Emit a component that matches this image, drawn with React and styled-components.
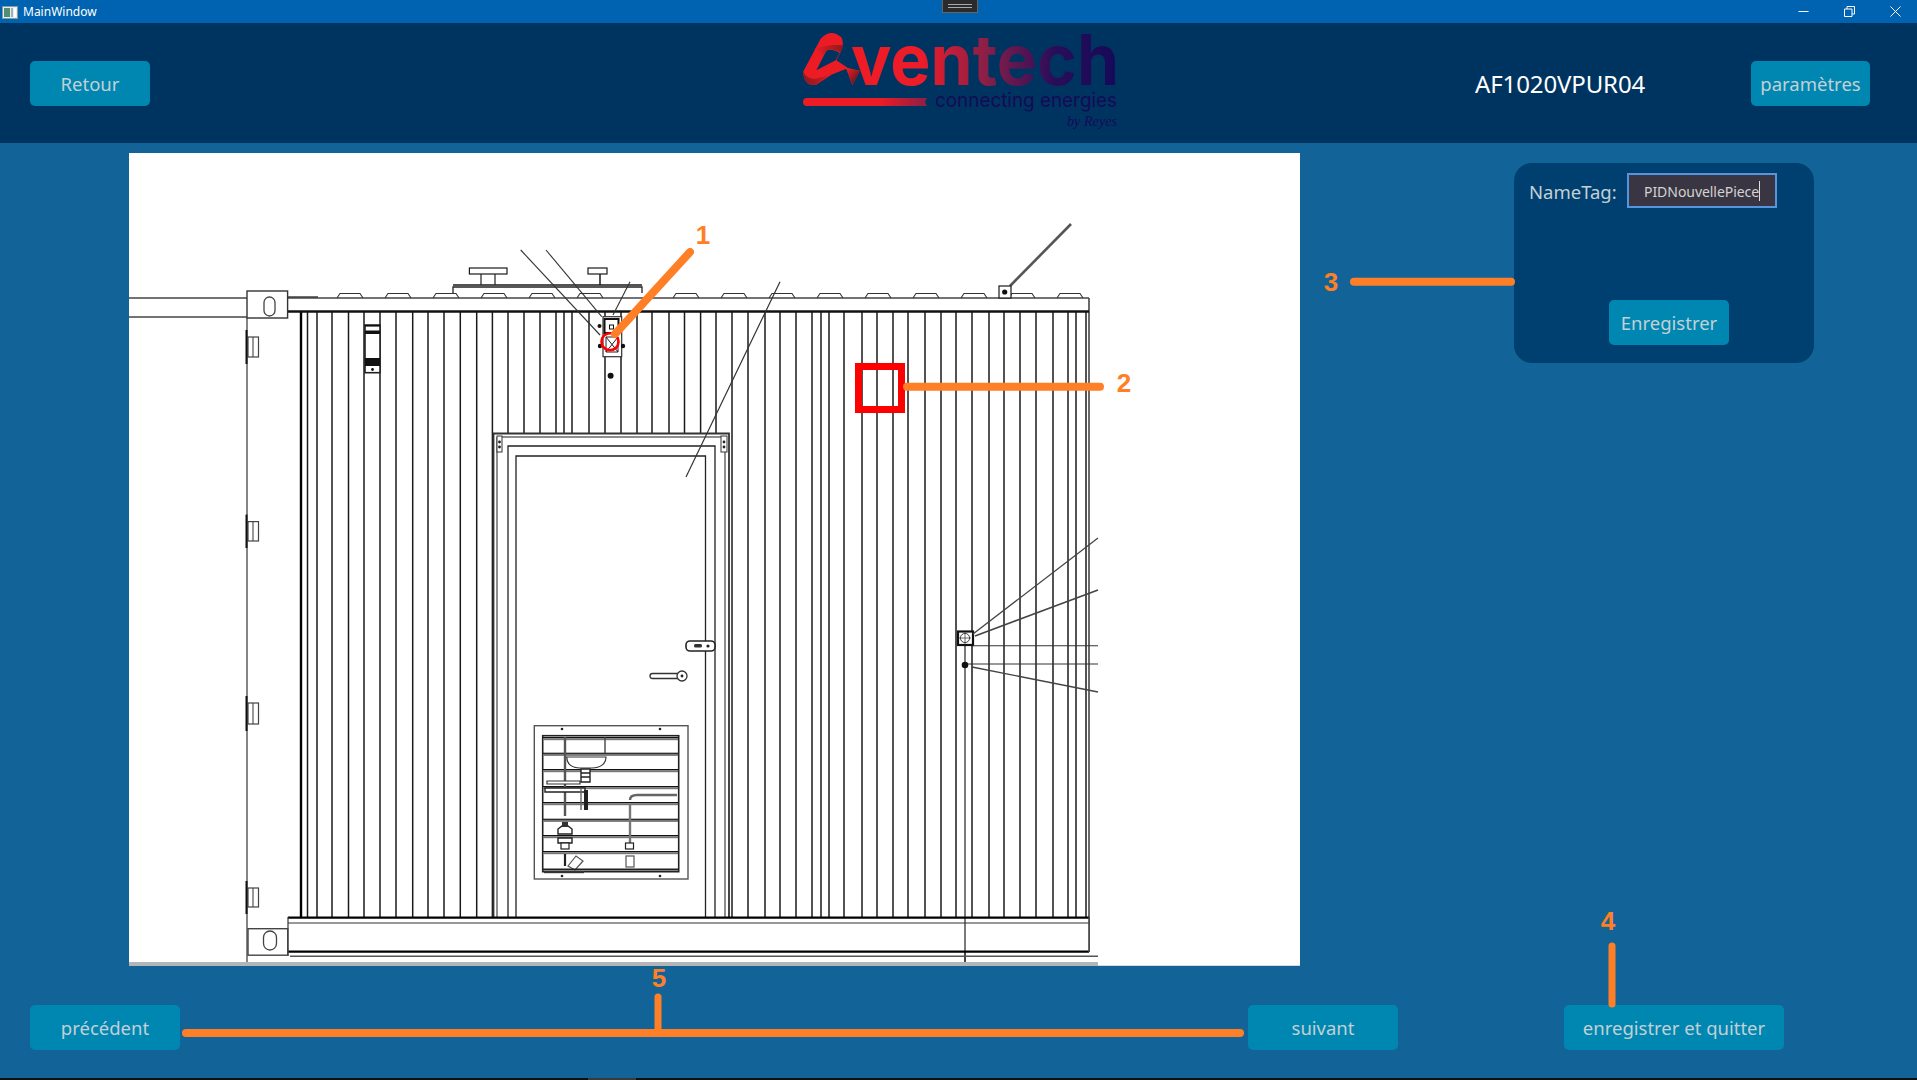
import React from "react";
import styled, { createGlobalStyle } from "styled-components";

const Global = createGlobalStyle`
  html, body { margin: 0; padding: 0; background: #126498; }
  * { box-sizing: border-box; }
`;

const UI = `"Noto Sans", "Open Sans", "Liberation Sans", sans-serif`;

const Page = styled.div`
  position: relative; width: 1917px; height: 1080px; overflow: hidden;
  display: flex; flex-direction: column; background: #126498; font-family: ${UI};
`;
const TitleBar = styled.div`
  position: relative; height: 23px; flex: none; background: #0063b1; color: #fff;
  display: flex; align-items: center; padding-left: 2px;
`;
const TitleText = styled.span`margin-left: 5px; font-size: 12px; line-height: 23px;`;
const WindowButtons = styled.div`margin-left: auto; margin-right: -1px; display: flex; height: 23px;`;
const WindowButton = styled.span`
  width: 46px; height: 23px; display: flex; align-items: center; justify-content: center;
`;
const SnapTab = styled.div`
  position: absolute; left: 942px; top: 0; width: 36px; height: 13px;
  background: #2b2b2b; border: 1px solid #666; border-top: 0;
  display: flex; flex-direction: column; gap: 2px; align-items: center; justify-content: center;
  &::before, &::after { content: ""; width: 24px; height: 1px; background: #aaa; }
`;
const Header = styled.header`
  height: 120px; flex: none; background: #003460; display: flex; align-items: center;
  padding-left: 30px;
`;
const Button = styled.button`
  height: 45px; width: ${(p) => p.$w}px; flex: none; border: 0; border-radius: 5px; padding: 1px 0 0;
  background: #0087b1; color: #c3d0d5; font-family: ${UI}; font-size: 18.5px; line-height: 44px;
`;
const Logo = styled.svg`display: block; flex: none; margin-left: 645px; width: 330px; height: 120px; overflow: visible;`;
const ProductName = styled.div`
  flex: none; width: 276px; margin-left: 350px; color: #fff; font-size: 24px;
  letter-spacing: -0.12px; white-space: nowrap;
`;
const Main = styled.main`
  flex: none; display: flex; align-items: flex-start; padding: 10px 0 0 129px;
`;
const Sheet = styled.svg`
  display: block; flex: none; width: 1171px; height: 813px; background: #fff;
`;
const SidePanel = styled.section`
  flex: none; width: 300px; height: 200px; margin: 10px 0 0 214px; padding: 10px 16px 10px 15px;
  border-radius: 18px; background: #004070; display: flex; flex-direction: column;
`;
const FieldRow = styled.div`display: flex; align-items: center; gap: 11px; height: 35px;`;
const Label = styled.label`color: #c3d0d5; font-size: 18.5px; width: 87px; white-space: nowrap; padding-top: 2px;`;
const TextField = styled.div`
  width: 150px; height: 35px; flex: none; border: 2px solid #5595e0; background: #3a3542;
  color: #d3d3d3; font-size: 14px; padding: 1px 0 0 15px; display: flex; align-items: center;
  letter-spacing: -0.05px;
`;
const Caret = styled.span`display: inline-block; width: 1px; height: 20px; background: #ddd;`;
const PanelActions = styled.div`margin-top: 92px; padding-left: 80px; display: flex;`;
const BottomBar = styled.div`
  flex: none; display: flex; margin-top: 39px; padding-left: 30px;
`;
const NextWrap = styled.div`flex: none; margin-left: 1068px;`;
const QuitWrap = styled.div`flex: none; margin-left: 166px;`;
const Edge = styled.div`
  position: absolute; left: 0; right: 0; bottom: 0; height: 2px; background: #111;
  &::after { content: ""; position: absolute; left: 588px; width: 48px; top: 0; height: 2px; background: #3a3a3a; }
`;
const Overlay = styled.svg`
  position: absolute; left: 0; top: 0; width: 1917px; height: 1080px; pointer-events: none;
`;
const Mark = styled.text`
  font-family: "Liberation Sans", Arial, sans-serif; font-weight: 700; font-size: 26px; fill: #ff7f27;
`;

const panels = [307.5,317,332,348.5,364,380,396,412.7,428,444,460.3,476.7,492.4];
const upper = [508,524,540,556,564,572,589,605,621,637,652,669,684.5,700.6];
const right = [716,732,748,765,780,796,812,821,829,844,862,877,893,908,925,941,956,972,989,1004,1020,1036,1053,1068,1076,1086];
const bumps = [337,385,433,481,529,577,673,721,769,817,865,913,961,1009,1057];
const slats = [737,752.7,769,786,802,818.7,835,851];
const hinges = [[337,357],[521.6,541],[703,724],[888,907]];

const S = ({ x1, y1, x2, y2, w = 1.5, c = "#1a1a1a" }) => <line x1={x1} y1={y1} x2={x2} y2={y2} stroke={c} strokeWidth={w} />;
const R = ({ x, y, w, h, s = 1.2, f = "#fff", c = "#1a1a1a", r = 0 }) => <rect x={x} y={y} width={w} height={h} rx={r} fill={f} stroke={c} strokeWidth={s} />;

function Drawing() {
  return (
    <Sheet viewBox="129 153 1171 813">
      {/* corrugated wall */}
      <S x1={301} y1={312} x2={301} y2={917} w={2.4} c="#000" />
      {panels.map((x) => <S key={x} x1={x} y1={312} x2={x} y2={917} />)}
      {upper.map((x) => <S key={x} x1={x} y1={312} x2={x} y2={433} />)}
      {right.map((x) => <S key={x} x1={x} y1={312} x2={x} y2={917} />)}
      <S x1={1089} y1={298} x2={1089} y2={952} w={1.6} c="#444" />

      {/* roof */}
      <S x1={129} y1={298} x2={1089} y2={298} w={1.4} c="#444" />
      <S x1={129} y1={317} x2={288} y2={317} w={1.4} c="#444" />
      <S x1={288} y1={311.5} x2={1089} y2={311.5} w={2.4} c="#111" />
      <S x1={288} y1={297} x2={318} y2={297} w={1.4} c="#333" />
      {bumps.map((x) => (
        <path key={x} d={`M${x} 298 l3 -4.5 h20 l3 4.5`} fill="none" stroke="#333" strokeWidth="1.1" />
      ))}
      <path d="M453 293 v-6 h189 v6" fill="#fff" stroke="#222" strokeWidth="1.3" />
      <S x1={453} y1={285} x2={642} y2={285} w={1.3} />
      <R x={469.4} y={268} w={37.6} h={6} />
      <path d="M481 274 v11 M495 274 v11" stroke="#222" strokeWidth="1.2" fill="none" />
      <R x={588} y={268} w={19} h={6} />
      <S x1={600} y1={274} x2={600} y2={285} />
      <R x={247} y={291} w={40.6} h={27} s={1.4} c="#333" />
      <rect x={264} y={297} width={11} height={19} rx={5.5} fill="#fff" stroke="#444" strokeWidth="1.3" />

      {/* door on the left end */}
      <S x1={247} y1={318} x2={247} y2={966} w={1.2} c="#333" />
      {hinges.map(([a, b]) => (
        <g key={a}>
          <R x={248} y={a} w={10.5} h={b - a} c="#444" />
          <S x1={253} y1={a} x2={253} y2={b} w={1.1} c="#444" />
          <S x1={246.5} y1={a - 7} x2={246.5} y2={b + 7} w={2} c="#111" />
        </g>
      ))}

      {/* left wall unit */}
      <R x={365} y={325} w={15} h={47.7} c="#222" s={1.6} />
      <rect x={365} y={325} width={15} height={1.6} fill="#111" />
      <rect x={365} y={330.5} width={15} height={3.5} fill="#111" />
      <rect x={365} y={358} width={15} height={8} fill="#111" />
      <circle cx={372.5} cy={369.5} r={1.4} fill="#111" />

      {/* leaders */}
      <S x1={520.7} y1={250} x2={600} y2={335} w={1.1} c="#333" />
      <S x1={546} y1={250} x2={601.7} y2={316.7} w={1.1} c="#333" />
      <S x1={630} y1={281.7} x2={613} y2={315} w={1.1} c="#333" />
      <S x1={1071} y1={224} x2={1010} y2={286} w={2.6} c="#555" />
      <R x={999} y={286} w={12} h={12} />
      <circle cx={1004.7} cy={292} r={2.6} fill="#111" />

      {/* device */}
      <R x={603} y={316.7} w={18.7} h={40} c="#333" />
      <rect x={604.5} y={319} width={14} height={14} fill="#fff" stroke="#111" strokeWidth="2" />
      <rect x={609.5} y={325} width={4} height={4} fill="#fff" stroke="#111" strokeWidth="1" />
      <path d="M606 337 h12 v15 h-12 z M606 337 l12 15 M618 337 l-12 15" fill="none" stroke="#222" strokeWidth="1" />
      <circle cx={600} cy={346} r={2.2} fill="#111" />
      <circle cx={623} cy={346} r={2.2} fill="#111" />
      <circle cx={599.5} cy={326} r={2} fill="#111" />
      <circle cx={610.6} cy={375.7} r={3} fill="#111" />

      {/* personnel door */}
      <rect x={494} y={433} width={235} height={484} fill="#fff" stroke="none" />
      <path d="M493.5 917 V433.5 H729 V917" fill="none" stroke="#333" strokeWidth="1.8" />
      <S x1={497} y1={437} x2={725} y2={437} w={1.1} />
      <path d="M497 917 V437 M725 917 V437" fill="none" stroke="#333" strokeWidth="1.1" />
      <path d="M508 917 V446 H715 V917" fill="none" stroke="#222" strokeWidth="1.3" />
      <path d="M516 917 V456 H705.5 V917" fill="none" stroke="#222" strokeWidth="1.3" />
      <rect x={497} y={436} width={5} height={16} fill="#fff" stroke="#333" />
      <rect x={721} y={436} width={6} height={16} fill="#fff" stroke="#333" />
      <circle cx={499.5} cy={442} r={1.4} fill="#222" />
      <circle cx={499.5} cy={447} r={1.4} fill="#222" />
      <circle cx={724} cy={442} r={1.4} fill="#222" />
      <circle cx={724} cy={447} r={1.4} fill="#222" />
      <S x1={780} y1={281.7} x2={686} y2={477} w={1.2} c="#333" />

      <rect x={686} y={641} width={29} height={10} rx={4} fill="#fff" stroke="#222" strokeWidth="1.6" />
      <rect x={694} y={644} width={8} height={3.5} rx={1.5} fill="#333" />
      <circle cx={708} cy={646} r={1.6} fill="#222" />
      <rect x={650} y={673.5} width={30} height={5} rx={2.5} fill="#fff" stroke="#333" strokeWidth="1.3" />
      <circle cx={682} cy={676} r={5} fill="#fff" stroke="#333" strokeWidth="1.3" />
      <circle cx={682} cy={676} r={1.4} fill="#222" />

      {/* louvre hatch */}
      <R x={534.3} y={725.7} w={153.7} h={153.3} s={1.4} c="#555" />
      <R x={542.7} y={735.7} w={136} h={136} s={1.6} c="#222" />
      {[[562,729],[660,729],[562,876],[660,876]].map(([x, y]) => <circle key={x + "" + y} cx={x} cy={y} r={1.3} fill="#222" />)}
      {slats.map((y) => (
        <g key={y}>
          <rect x={543} y={y} width={135} height={1.2} fill="#111" />
          <rect x={543} y={y + 1.2} width={135} height={2} fill="#777" />
        </g>
      ))}
      <path d="M565 737 V816" stroke="#555" strokeWidth="2.4" fill="none" />
      <path d="M605 737 V753" stroke="#444" strokeWidth="1.4" fill="none" />
      <path d="M566.7 757 h39.3 c0 7 -6 11 -14 11 h-12 c-8 0 -13.3 -4 -13.3 -11 z" fill="#fff" stroke="#333" strokeWidth="1.2" />
      <path d="M581 769 h9 v13 h-9 z M581 773 h9 M581 777 h9" fill="#fff" stroke="#222" strokeWidth="1.4" />
      <path d="M547 781 h33 v3 h-33 z" fill="#fff" stroke="#333" strokeWidth="1.2" />
      <path d="M545 788 h40 v4 h-40 z" fill="#fff" stroke="#222" strokeWidth="1.4" />
      <path d="M581 789 V810" stroke="#666" strokeWidth="1.4" fill="none" />
      <rect x={584} y={790} width={4} height={20} fill="#222" />
      <path d="M558 829 l4 -3 h6 l4 3 v5 h-14 z M558 838 h14 v5 h-14 z" fill="#fff" stroke="#222" strokeWidth="1.4" />
      <rect x={562} y={822} width={6} height={5} fill="#333" />
      <rect x={561} y={843} width={8} height={6} fill="#fff" stroke="#222" strokeWidth="1.2" />
      <path d="M565 854 V866" stroke="#222" strokeWidth="2.2" fill="none" />
      <path d="M568 866 l8 -10 l7 5 l-8 9 z" fill="#fff" stroke="#555" strokeWidth="1.2" />
      <path d="M630 804 V843" stroke="#777" strokeWidth="2.4" fill="none" />
      <path d="M630 800 q0 -5 7 -5 H677" stroke="#666" strokeWidth="2.4" fill="none" />
      <rect x={625.5} y={843} width={8} height={6} fill="#fff" stroke="#222" strokeWidth="1.2" />
      <rect x={626} y={856} width={8} height={11} fill="#fff" stroke="#555" strokeWidth="1.2" />
      <rect x={543} y={868.5} width={135} height={2} fill="#222" />
      <rect x={544} y={871} width={40} height={2.2} fill="#333" />

      {/* right-hand sensors */}
      <S x1={965} y1={645} x2={965} y2={966} w={1.2} c="#222" />
      <rect x={958} y={631.5} width={15} height={13.5} fill="#fff" stroke="#111" strokeWidth="2.2" />
      <circle cx={965} cy={638} r={4.6} fill="none" stroke="#444" strokeWidth="1" />
      <path d="M965 632 v12 M959 638 h12" stroke="#444" strokeWidth="0.8" />
      <S x1={973} y1={634} x2={1098} y2={538} w={1.3} c="#444" />
      <S x1={975} y1={636} x2={1098} y2={590} w={1.5} c="#444" />
      <S x1={973} y1={645.7} x2={1098} y2={645.7} w={1.1} c="#333" />
      <S x1={965} y1={664} x2={1098} y2={664} w={1.1} c="#333" />
      <S x1={972} y1={667} x2={1098} y2={692} w={1.4} c="#444" />
      <circle cx={965} cy={665} r={3.3} fill="#111" />

      {/* sill */}
      <rect x={288} y={918} width={801} height={34} fill="#fff" />
      <S x1={965} y1={918} x2={965} y2={966} w={1.2} c="#222" />
      <S x1={288} y1={917.7} x2={1089} y2={917.7} w={2.2} c="#000" />
      <S x1={288} y1={923} x2={1089} y2={923} w={1.1} c="#333" />
      <S x1={288} y1={951.7} x2={1089} y2={951.7} w={2.2} c="#000" />
      <S x1={288} y1={917} x2={288} y2={956} w={1.2} c="#333" />
      <S x1={1089} y1={917} x2={1089} y2={952} w={1.6} c="#444" />
      <S x1={290} y1={956.3} x2={1098} y2={956.3} w={1.4} c="#555" />
      <R x={248} y={928.7} w={39.7} h={26.5} c="#444" s={1.4} />
      <rect x={263.5} y={931} width={13} height={19} rx={6.5} fill="#fff" stroke="#444" strokeWidth="1.3" />
      <rect x={129} y={962} width={969} height={4} fill="#b5b5b5" />
      <rect x={1098} y={965} width={202} height={1} fill="#d8d8d8" />
    </Sheet>
  );
}

function BrandLogo() {
  return (
    <Logo viewBox="795 23 330 120">
      <defs>
        <linearGradient id="word" gradientUnits="userSpaceOnUse" x1="853" y1="0" x2="1117" y2="0">
          <stop offset="0" stopColor="#ed1c24" />
          <stop offset="0.26" stopColor="#ed1c2a" />
          <stop offset="0.5" stopColor="#8b1f47" />
          <stop offset="0.76" stopColor="#2a0d5a" />
          <stop offset="1" stopColor="#150a58" />
        </linearGradient>
        <linearGradient id="bar" gradientUnits="userSpaceOnUse" x1="803" y1="0" x2="927" y2="0">
          <stop offset="0.62" stopColor="#ed1c24" />
          <stop offset="1" stopColor="#8b1f47" />
        </linearGradient>
        <linearGradient id="foldTop" gradientUnits="userSpaceOnUse" x1="50" y1="70" x2="135" y2="60">
          <stop offset="0" stopColor="#ed1c24" />
          <stop offset="1" stopColor="#8c1a1f" />
        </linearGradient>
        <linearGradient id="foldLow" gradientUnits="userSpaceOnUse" x1="20" y1="160" x2="110" y2="130">
          <stop offset="0" stopColor="#8c1a1f" />
          <stop offset="1" stopColor="#ed1c24" />
        </linearGradient>
        <linearGradient id="foldRight" gradientUnits="userSpaceOnUse" x1="145" y1="125" x2="175" y2="150">
          <stop offset="0" stopColor="#ed1c24" />
          <stop offset="1" stopColor="#7c181e" />
        </linearGradient>
      </defs>
      <g transform="translate(798 28) scale(0.3333)">
        <path
          fillRule="evenodd"
          fill="#ed1c24"
          d="M15 132 L68 32 Q98 0 130 28 Q140 45 128 72 L115 97 L150 120 L185 128 L163 172 L145 122 L100 140 L55 170 Q20 178 15 132 Z M55 127 L85 68 Q100 60 125 75 L113 97 Z"
        />
        <path fill="url(#foldTop)" d="M50 62 Q95 48 136 52 L128 74 Q100 58 85 68 L76 82 Z" />
        <path fill="url(#foldLow)" d="M15 130 Q18 174 52 171 L100 140 L60 150 Q30 160 15 130 Z" />
        <path fill="url(#foldRight)" d="M145 122 L185 128 L164 172 Z" />
      </g>
      <text x="851" y="85" fontFamily="Inter, sans-serif" fontWeight="700" fontSize="70" fill="url(#word)" textLength="268" lengthAdjust="spacingAndGlyphs">ventech</text>
      <path d="M807 98 H927 L925 102 L927 106 H807 a4 4 0 0 1 0 -8 z" fill="url(#bar)" />
      <text x="935" y="106.5" fontFamily="Inter, sans-serif" fontWeight="400" fontSize="20" fill="#150a58" textLength="182" lengthAdjust="spacingAndGlyphs">connecting energies</text>
      <text x="1067" y="126" fontFamily="'Liberation Serif', serif" fontStyle="italic" fontSize="15" fill="#150a58" textLength="50" lengthAdjust="spacingAndGlyphs">by Reyes</text>
    </Logo>
  );
}

function Annotations() {
  const line = { stroke: "#ff7f27", strokeLinecap: "round", fill: "none" };
  return (
    <Overlay viewBox="0 0 1917 1080">
      <circle cx={610} cy={341.7} r={8.5} fill="none" stroke="#f00" strokeWidth="2.6" />
      <rect x={858.5} y={366.5} width={43} height={43} fill="none" stroke="#f00" strokeWidth="7" />
      <line x1={615} y1={334} x2={690} y2={252} strokeWidth="8" {...line} />
      <line x1={907} y1={386.7} x2={1100} y2={386.7} strokeWidth="8" {...line} />
      <line x1={1354} y1={281.7} x2={1511} y2={281.7} strokeWidth="8" {...line} />
      <line x1={1612} y1={946} x2={1612} y2={1004} strokeWidth="7" {...line} />
      <line x1={186} y1={1033} x2={1240} y2={1033} strokeWidth="8" {...line} />
      <line x1={658} y1={997} x2={658} y2={1030} strokeWidth="7" {...line} />
      <Mark x={703} y={244} textAnchor="middle">1</Mark>
      <Mark x={1124} y={392} textAnchor="middle">2</Mark>
      <Mark x={1331} y={291} textAnchor="middle">3</Mark>
      <Mark x={1608} y={930} textAnchor="middle">4</Mark>
      <Mark x={659} y={987} textAnchor="middle">5</Mark>
    </Overlay>
  );
}

export default function App() {
  return (
    <Page>
      <Global />
      <TitleBar>
        <svg width="16" height="14" viewBox="0 0 16 14">
          <rect x="0.5" y="1.5" width="15" height="12" fill="#e8eef0" stroke="#8b99a3" />
          <rect x="2" y="3" width="6" height="9" fill="#4f8f78" />
          <rect x="9" y="3" width="2" height="9" fill="#9fb0b8" />
          <rect x="12" y="3" width="2" height="9" fill="#fff" />
        </svg>
        <TitleText>MainWindow</TitleText>
        <SnapTab />
        <WindowButtons>
          <WindowButton>
            <svg width="11" height="11" viewBox="0 0 11 11"><path d="M0.5 5.5 H10.5" stroke="#fff" fill="none" /></svg>
          </WindowButton>
          <WindowButton>
            <svg width="11" height="11" viewBox="0 0 11 11"><path d="M0.5 3 H8 V10.5 H0.5 Z M3 3 V0.5 H10.5 V8 H8" stroke="#fff" fill="none" /></svg>
          </WindowButton>
          <WindowButton>
            <svg width="11" height="11" viewBox="0 0 11 11"><path d="M0.5 0.5 L10.5 10.5 M10.5 0.5 L0.5 10.5" stroke="#fff" fill="none" /></svg>
          </WindowButton>
        </WindowButtons>
      </TitleBar>
      <Header>
        <Button $w={120}>Retour</Button>
        <BrandLogo />
        <ProductName>AF1020VPUR04</ProductName>
        <Button $w={119}>paramètres</Button>
      </Header>
      <Main>
        <Drawing />
        <SidePanel>
          <FieldRow>
            <Label>NameTag:</Label>
            <TextField>PIDNouvellePiece<Caret /></TextField>
          </FieldRow>
          <PanelActions>
            <Button $w={120}>Enregistrer</Button>
          </PanelActions>
        </SidePanel>
      </Main>
      <BottomBar>
        <Button $w={150}>précédent</Button>
        <NextWrap><Button $w={150}>suivant</Button></NextWrap>
        <QuitWrap><Button $w={220}>enregistrer et quitter</Button></QuitWrap>
      </BottomBar>
      <Annotations />
      <Edge />
    </Page>
  );
}
